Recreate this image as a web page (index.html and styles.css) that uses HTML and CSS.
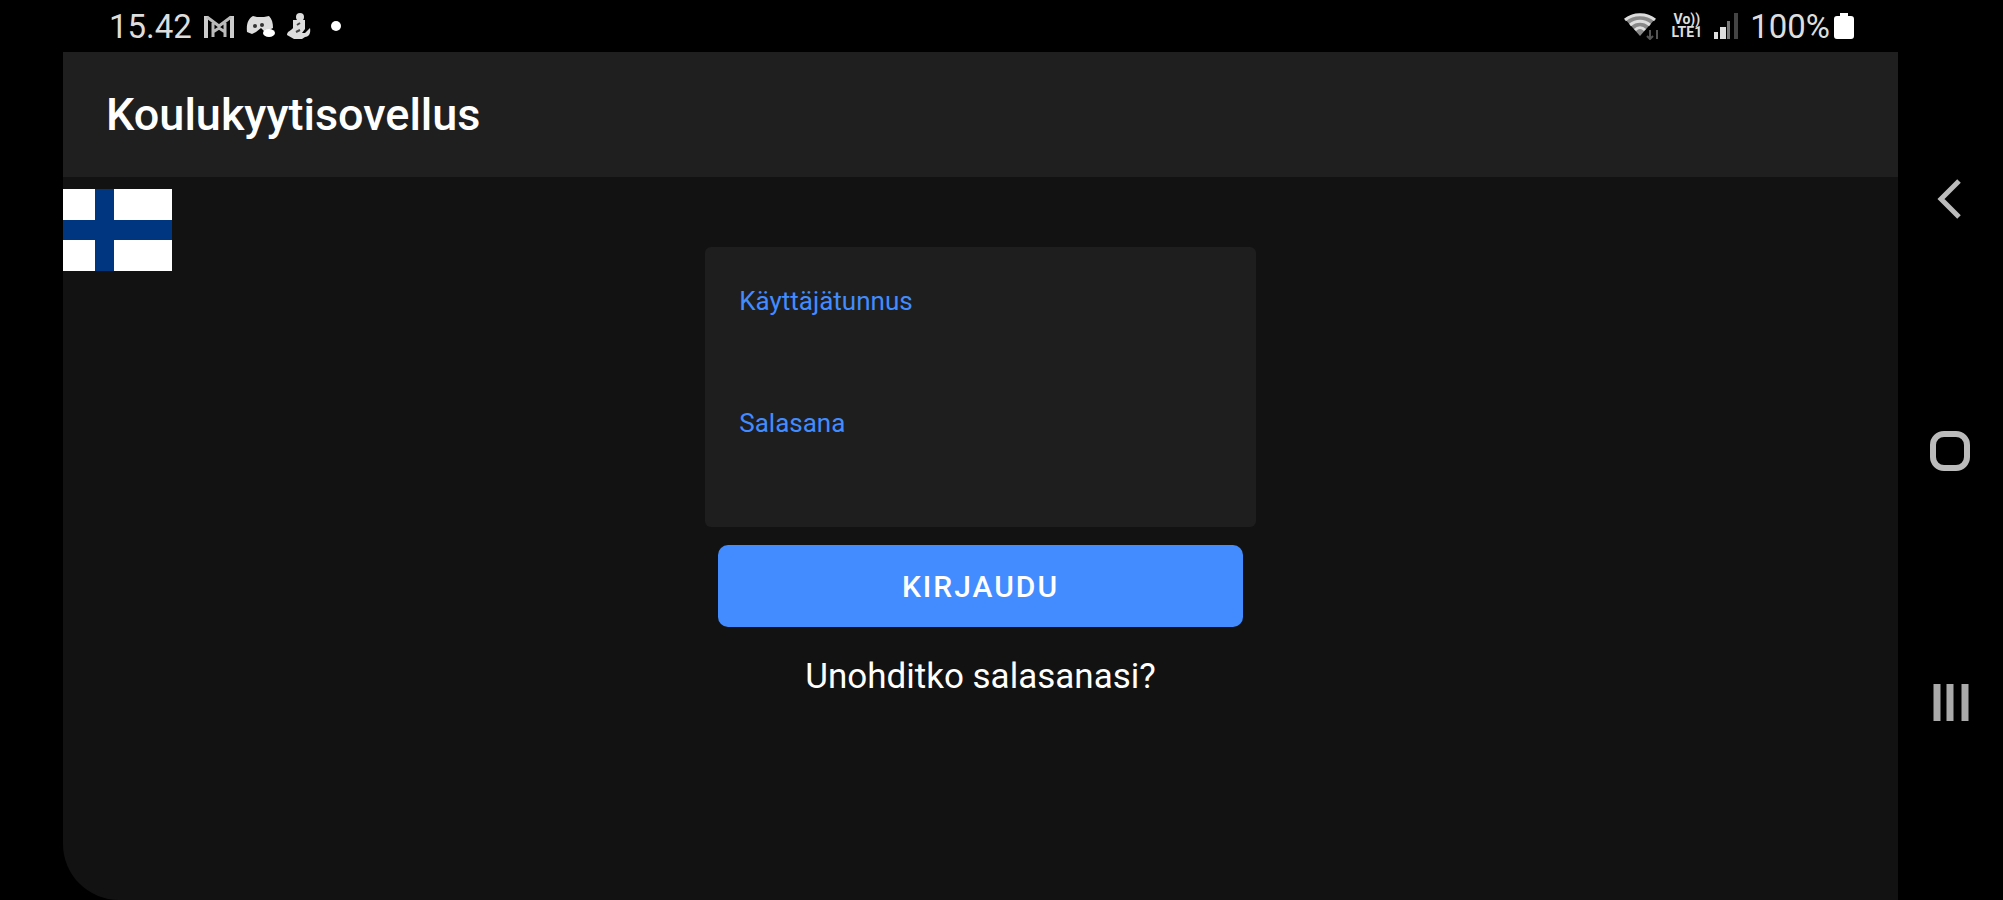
FILE: index.html
```html
<!DOCTYPE html>
<html lang="fi">
<head>
    <meta charset="UTF-8">
    <meta name="viewport" content="width=device-width, initial-scale=1.0">
    <title>Koulukyytisovellus</title>
    <link rel="stylesheet" href="styles.css">
</head>
<body>
    <div class="status-bar">
        <div class="status-left">
            <span>15.42</span>
            <svg class="icon-mail" width="32" height="26" viewBox="0 0 32 26">
                <path d="M3 25V3M29 25V3" fill="none" stroke="#ccc" stroke-width="4"/>
                <path d="M4 4l12 9 12-9M10 24V10M22 24V10M10 19l6-4 6 4" fill="none" stroke="#bbb" stroke-width="3"/>
            </svg>
            <svg class="icon-chat" width="30" height="26" viewBox="0 0 30 26">
                <path d="M1 19C0 10 3 5 7 3l4 1h7l5-1c3 3 4 7 4 12l-8 4-4-4-5 4-4 2z" fill="#ddd"/>
                <circle cx="9" cy="13" r="2" fill="#333"/>
                <circle cx="16" cy="12" r="2" fill="#333"/>
                <ellipse cx="23" cy="20" rx="6" ry="4" fill="#fff"/>
            </svg>
            <svg class="icon-bell" width="24" height="26" viewBox="0 0 24 26">
                <circle cx="13" cy="4" r="4" fill="#ddd"/>
                <path d="M6 7h12v9l-3 4h3l5-5c1 5-1 9-5 9l-3 2H7l-7-4c0-4 4-4 6-7z" fill="#ddd"/>
                <path d="M10 12l3-2M9 19l4-2" stroke="#444" stroke-width="2"/>
            </svg>
            <svg class="icon-dot" width="12" height="12" viewBox="0 0 12 12"><circle cx="6" cy="6" r="5" fill="#fff"/></svg>
        </div>
        <div class="status-right">
            <svg class="icon-wifi" width="36" height="28" viewBox="0 0 36 28">
                <path d="M1 7C9 0 23 0 31 7L16 24z" fill="#888"/>
                <path d="M1 8C9 1 23 1 31 8M6 13c6-5 14-5 20 0M11 18c3-3 7-3 10 0" fill="none" stroke="#ddd" stroke-width="3"/>
                <path d="M26 27v-9M23 24l3 3 3-3M33 27v-9" fill="none" stroke="#555" stroke-width="2"/>
            </svg>
            <span class="volte"><span>Vo))</span><span>LTE1</span></span>
            <svg class="icon-signal" width="24" height="26" viewBox="0 0 24 26">
                <path d="M0 19h4v7H0zM6 14h6v12H6z" fill="#ddd"/>
                <path d="M13 8h3v18h-3z" fill="#777"/>
                <path d="M20 0h4v26h-4z" fill="#444"/>
            </svg>
            <span>100%</span>
            <svg class="icon-battery" width="20" height="26" viewBox="0 0 20 26">
                <path d="M6 0h8v3h3q3 0 3 3v17q0 3-3 3H3q-3 0-3-3V6q0-3 3-3h3z" fill="#fff"/>
            </svg>
        </div>
    </div>

    <div class="app">
        <header class="header">
            <h1>Koulukyytisovellus</h1>
        </header>
        <main class="content">
            <button class="language" type="button" aria-label="Suomi">
                <svg width="109" height="82" viewBox="0 0 109 82">
                    <path fill="#fff" d="M0 0h109v82H0z"/>
                    <path fill="#003580" d="M32 0h19v82H32zM0 31h109v20H0z"/>
                </svg>
            </button>
            <form class="login">
                <div class="card">
                    <div class="field">
                        <label for="username">Käyttäjätunnus</label>
                        <input type="text" id="username">
                    </div>
                    <div class="field">
                        <label for="password">Salasana</label>
                        <input type="password" id="password">
                    </div>
                </div>
                <button class="button" type="submit">Kirjaudu</button>
                <a class="forgot" href="#">Unohditko salasanasi?</a>
            </form>
        </main>
    </div>

    <nav class="nav">
        <button type="button" aria-label="Takaisin">
            <svg width="48" height="48" viewBox="0 0 48 48"><path d="M32 7L14 25l18 18" fill="none" stroke="#bbb" stroke-width="5"/></svg>
        </button>
        <button type="button" aria-label="Koti">
            <svg width="48" height="48" viewBox="0 0 48 48"><rect x="6" y="8" width="34" height="34" rx="11" fill="none" stroke="#bbb" stroke-width="6"/></svg>
        </button>
        <button type="button" aria-label="Viimeisimmät">
            <svg width="48" height="48" viewBox="0 0 48 48"><path d="M10 6v37M23 6v37M38 6v37" stroke="#aaa" stroke-width="7"/></svg>
        </button>
    </nav>
</body>
</html>
```
FILE: styles.css
```css
* {
    box-sizing: border-box;
}
body {
    margin: 0;
    min-height: 100vh;
    display: grid;
    grid-template-columns: 63px 1fr 105px;
    grid-template-rows: 52px 1fr;
    background: #000;
    color: #fff;
    font-family: Roboto, sans-serif;
}
button {
    padding: 0;
    border: none;
    background: none;
    font-family: inherit;
    cursor: pointer;
}
svg {
    display: block;
}

/* Status bar */
.status-bar {
    grid-column: 2;
    display: flex;
    justify-content: space-between;
    padding: 0 44px 0 46px;
    font-size: 33px;
    color: #ddd;
}
.status-left, .status-right {
    display: flex;
    align-items: center;
}
.status-left {
    gap: 11px;
}
.status-right {
    gap: 12px;
}
.icon-dot {
    margin-left: 8px;
}
.icon-battery {
    margin-left: -8px;
}
.volte {
    display: flex;
    flex-direction: column;
    font-size: 14px;
    font-weight: 700;
    line-height: 13px;
    text-align: center;
}

/* App */
.app {
    grid-column: 2;
    display: flex;
    flex-direction: column;
    background: #121212;
    border-bottom-left-radius: 56px;
}
.header {
    padding: 32px 43px;
    background: #1f1f1f;
}
h1 {
    margin: 0;
    font-size: 45px;
    font-weight: 500;
    line-height: 61px;
}
.content {
    display: grid;
    grid-template-columns: 1fr 30% 1fr;
    align-items: start;
}
.language {
    justify-self: start;
    margin-top: 12px;
}
.login {
    display: flex;
    flex-direction: column;
    margin-top: 70px;
}
.card {
    padding: 18px 34px;
    background: #1e1e1e;
    border-radius: 6px;
}
.field {
    padding-top: 18px;
}
label {
    display: block;
    font-size: 26px;
    line-height: 36px;
    color: #428cff;
}
input {
    display: block;
    width: 100%;
    height: 68px;
    padding: 0;
    border: none;
    outline: none;
    background: transparent;
    color: #fff;
    font-family: inherit;
    font-size: 32px;
}
.button {
    height: 82px;
    margin: 18px 13px 0;
    background: #428cff;
    border-radius: 10px;
    color: #fff;
    font-size: 30px;
    font-weight: 500;
    letter-spacing: 2px;
    text-transform: uppercase;
}
.forgot {
    margin-top: 28px;
    color: #fff;
    font-size: 35px;
    line-height: 44px;
    text-align: center;
    text-decoration: none;
}

/* System navigation */
.nav {
    grid-column: 3;
    grid-row: 1 / 3;
    display: flex;
    flex-direction: column;
    align-items: center;
    justify-content: center;
    gap: 204px;
}
```
